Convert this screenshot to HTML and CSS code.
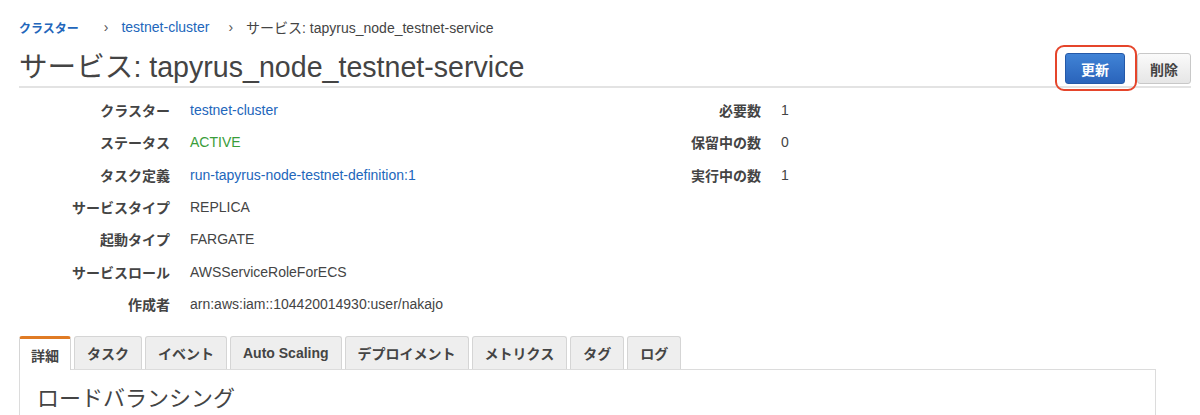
FILE: index.html
```html
<!DOCTYPE html>
<html lang="ja">
<head>
<meta charset="utf-8">
<link rel="stylesheet" href="styles.css">
</head>
<body>
<div class="page">
  <nav class="crumbs">
    <a class="crumb-root">クラスター</a>
    <span class="sep sep-1">›</span>
    <a class="crumb-link">testnet-cluster</a>
    <span class="sep sep-2">›</span>
    <span class="crumb-cur">サービス: tapyrus_node_testnet-service</span>
  </nav>
  <header class="head">
    <h1 class="title">サービス: tapyrus_node_testnet-service</h1>
    <div class="actions">
      <span class="hl-wrap">
        <button class="btn btn-primary">更新</button>
        <span class="hl-ring"></span>
      </span>
      <button class="btn btn-default">削除</button>
    </div>
  </header>
  <section class="details">
    <dl class="col col-left">
      <dt>クラスター</dt><dd><a class="link">testnet-cluster</a></dd>
      <dt>ステータス</dt><dd class="ok">ACTIVE</dd>
      <dt>タスク定義</dt><dd><a class="link">run-tapyrus-node-testnet-definition:1</a></dd>
      <dt>サービスタイプ</dt><dd>REPLICA</dd>
      <dt>起動タイプ</dt><dd>FARGATE</dd>
      <dt>サービスロール</dt><dd>AWSServiceRoleForECS</dd>
      <dt>作成者</dt><dd>arn:aws:iam::104420014930:user/nakajo</dd>
    </dl>
    <dl class="col col-right">
      <dt>必要数</dt><dd>1</dd>
      <dt>保留中の数</dt><dd>0</dd>
      <dt>実行中の数</dt><dd>1</dd>
    </dl>
  </section>
  <div class="tabs">
    <span class="tab active">詳細</span>
    <span class="tab">タスク</span>
    <span class="tab">イベント</span>
    <span class="tab">Auto Scaling</span>
    <span class="tab">デプロイメント</span>
    <span class="tab">メトリクス</span>
    <span class="tab">タグ</span>
    <span class="tab">ログ</span>
  </div>
  <div class="panel">
    <h2 class="panel-title">ロードバランシング</h2>
  </div>
</div>
</body>
</html>
```
FILE: styles.css
```css
* { box-sizing: border-box; }
html, body { margin: 0; padding: 0; background: #fff; }
body {
  font-family: "Liberation Sans", "Noto Sans CJK JP", sans-serif;
  font-size: 14px;
  color: #444;
  overflow: hidden;
  height: 415px;
}
.page { padding: 17px 9px 0 19px; }

.crumbs { display: flex; align-items: center; height: 20px; font-size: 14px; white-space: nowrap; }
.crumb-root { color: #2266bb; font-weight: bold; font-size: 12px; }
.crumb-link { color: #2266bb; }
.crumb-cur { color: #444; }
.sep { color: #555; font-size: 14px; }
.sep-1 { margin: 0 13px 0 25px; }
.sep-2 { margin: 0 13px 0 19px; }

.head {
  display: flex;
  align-items: flex-end;
  justify-content: space-between;
  height: 51px;
  border-bottom: 2px solid #e3e3e3;
  padding-bottom: 2px;
}
.title {
  margin: 0;
  font-size: 28.6px;
  line-height: 34px;
  font-weight: normal;
  color: #444;
  white-space: nowrap;
}
.actions { display: flex; align-items: center; gap: 12px; }
.hl-wrap { position: relative; display: inline-flex; }
.hl-ring {
  position: absolute;
  top: -8px; bottom: -7px; left: -10px; right: -12px;
  border: 2px solid #e5452b;
  border-radius: 9px;
}
.btn {
  font-family: inherit;
  font-size: 14px;
  font-weight: bold;
  height: 31px;
  border-radius: 3px;
  padding: 0;
  white-space: nowrap;
}
.btn-primary {
  width: 60px;
  color: #fff;
  background: linear-gradient(#4083d6, #2a64bb);
  border: 1px solid #2459a8;
}
.btn-default {
  width: 54px;
  color: #444;
  background: linear-gradient(#fafafa, #e6e6e6);
  border: 1px solid #c8c8c8;
}

.details { display: flex; padding-top: 6px; }
.col {
  display: grid;
  column-gap: 20px;
  margin: 0;
  grid-auto-rows: 32.3px;
  align-items: center;
}
.col-left { width: 581px; grid-template-columns: 151px 1fr; }
.col-right { grid-template-columns: 161px 1fr; }
dt { font-weight: bold; text-align: right; color: #444; white-space: nowrap; }
dd { margin: 0; color: #444; white-space: nowrap; }
.link { color: #2266bb; }
.ok { color: #3a9d3a; }

.tabs { display: flex; gap: 3px; margin-top: 16px; height: 33px; align-items: flex-end; }
.tab {
  height: 33px;
  display: flex;
  align-items: center;
  padding: 0 12px;
  font-weight: bold;
  background: #eeeeee;
  border: 1px solid #d5d5d5;
  border-bottom: none;
  border-radius: 3px 3px 0 0;
  color: #444;
  position: relative;
  z-index: 1;
  white-space: nowrap;
}
.tab.active {
  background: #fff;
  border-top: 3px solid #e07b24;
  height: 34px;
  margin-bottom: -1px;
  padding: 0 11px;
}
.panel {
  border: 1px solid #dcdcdc;
  border-bottom: none;
  margin-right: 35px;
  height: 60px;
  padding: 14px 17px;
}
.panel-title { margin: 0; font-size: 22px; line-height: 30px; font-weight: normal; color: #444; white-space: nowrap; }
```
